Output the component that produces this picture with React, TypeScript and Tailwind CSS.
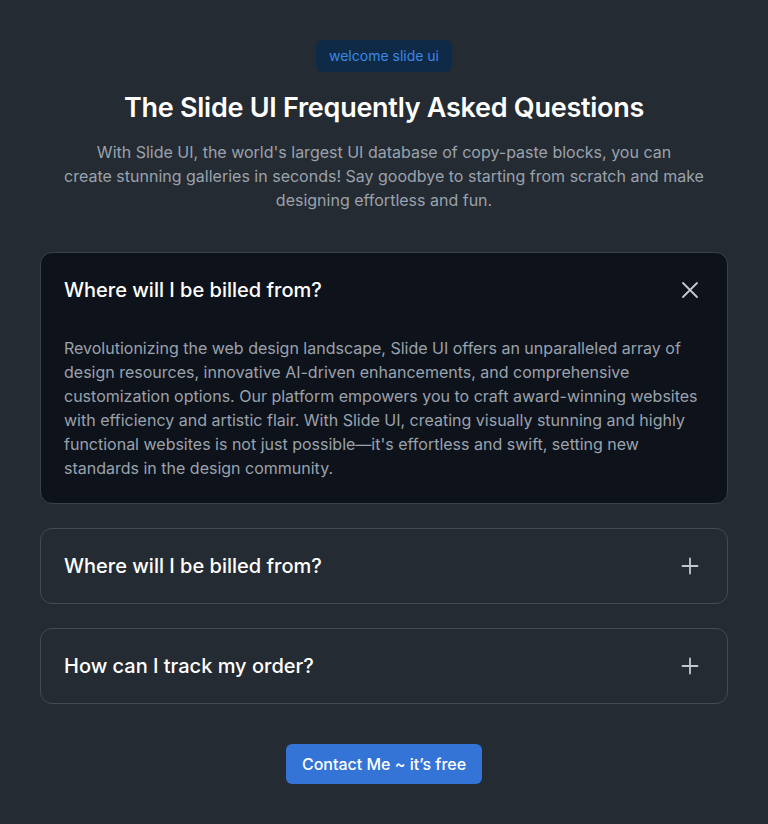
import React, { useState } from 'react';

const faqs = [
  {
    q: 'Where will I be billed from?',
    a: "Revolutionizing the web design landscape, Slide UI offers an unparalleled array of design resources, innovative AI-driven enhancements, and comprehensive customization options. Our platform empowers you to craft award-winning websites with efficiency and artistic flair. With Slide UI, creating visually stunning and highly functional websites is not just possible—it's effortless and swift, setting new standards in the design community.",
  },
  {
    q: 'Where will I be billed from?',
    a: "Revolutionizing the web design landscape, Slide UI offers an unparalleled array of design resources, innovative AI-driven enhancements, and comprehensive customization options.",
  },
  {
    q: 'How can I track my order?',
    a: 'Once your order ships you will receive an email with a tracking link so you can follow it every step of the way.',
  },
];

function CloseIcon() {
  return (
    <svg width="24" height="24" viewBox="0 0 24 24" fill="none" stroke="currentColor" strokeWidth="1.8" strokeLinecap="round">
      <path d="M5 5l14 14M19 5L5 19" />
    </svg>
  );
}

function PlusIcon() {
  return (
    <svg width="24" height="24" viewBox="0 0 24 24" fill="none" stroke="currentColor" strokeWidth="1.8" strokeLinecap="round">
      <path d="M12 4.5v15M4.5 12h15" />
    </svg>
  );
}

export default function App() {
  const [open, setOpen] = useState<number | null>(0);

  return (
    <div className="min-h-[824px] bg-[#252b32] px-10 pt-10 pb-10 font-['Inter',sans-serif]">
      <div className="flex flex-col items-center text-center">
        <span className="rounded-md bg-[#0e2a46] px-[13px] py-[6px] text-sm leading-5 text-[#3b87e6]">
          welcome slide ui
        </span>
        <h1 className="mt-5 text-[27px] font-semibold leading-8 tracking-[-0.01em] text-white">
          The Slide UI Frequently Asked Questions
        </h1>
        <p className="mt-[16px] max-w-[660px] text-base leading-6 text-[#9aa2ad]">
          With Slide UI, the world's largest UI database of copy-paste blocks, you can
          <br />
          create stunning galleries in seconds! Say goodbye to starting from scratch and make designing effortless
          and fun.
        </p>
      </div>

      <div className="mt-10 flex flex-col gap-6">
        {faqs.map((f, i) => {
          const isOpen = open === i;
          return (
            <div
              key={i}
              className={`rounded-xl border ${isOpen ? 'border-[#3a424b] bg-[#0e131b]' : 'border-[#444b54] bg-[#252b32]'}`}
            >
              <button
                onClick={() => setOpen(isOpen ? null : i)}
                className="flex w-full items-center justify-between pl-[23px] pr-[25px] py-[23px] text-left"
              >
                <span className="text-xl font-medium leading-7 text-white">{f.q}</span>
                <span className="text-[#c4c9d0]">{isOpen ? <CloseIcon /> : <PlusIcon />}</span>
              </button>
              {isOpen && (
                <div className="px-[23px] pt-[9px] pb-[23px] text-base leading-6 text-[#9aa2ad]">{f.a}</div>
              )}
            </div>
          );
        })}
      </div>

      <div className="mt-10 flex justify-center">
        <button className="rounded-md bg-[#3474d6] px-4 py-2 text-base leading-6 font-medium text-white">
          Contact Me ~ it’s free
        </button>
      </div>
    </div>
  );
}
